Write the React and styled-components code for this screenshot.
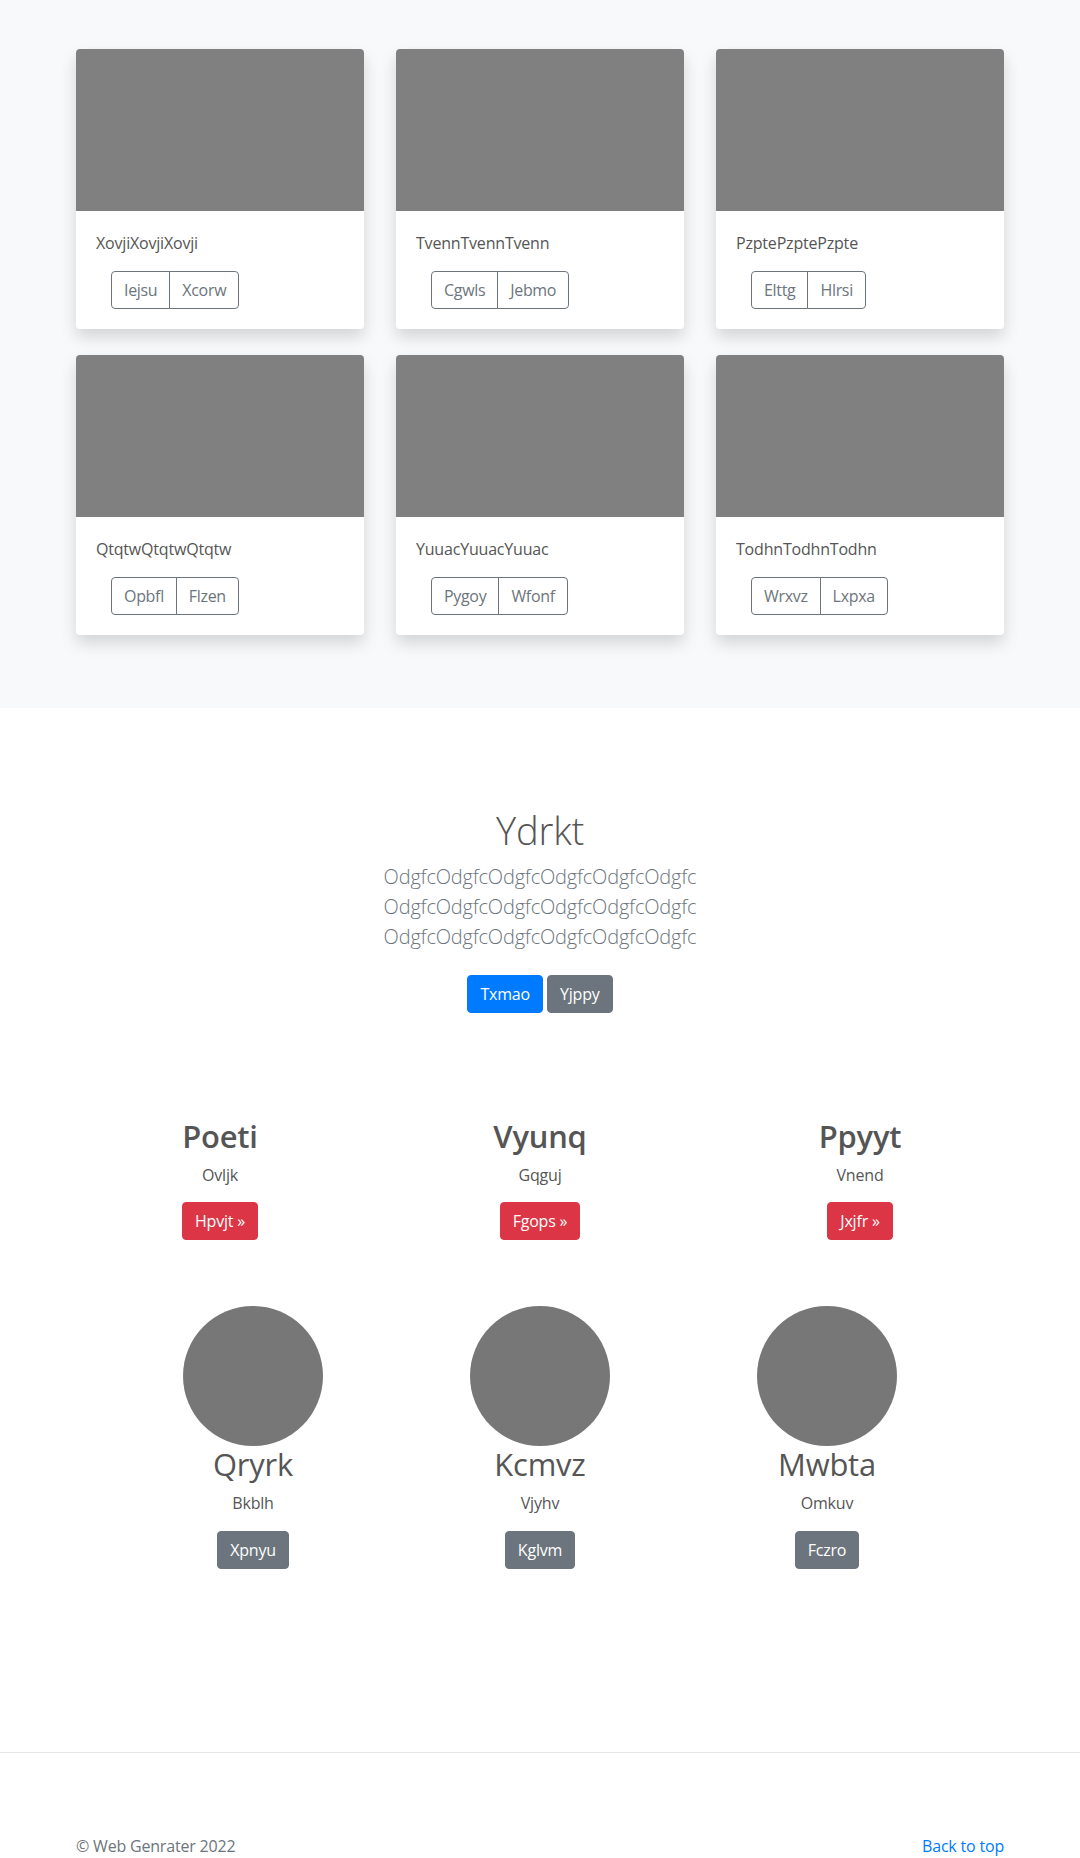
import React from 'react';
import styled, { createGlobalStyle } from 'styled-components';

const GlobalStyle = createGlobalStyle`
  *, *::before, *::after { box-sizing: border-box; }
  html, body { margin: 0; padding: 0; }
  body {
    font-family: "Open Sans", "Noto Sans", sans-serif;
    font-size: 16px;
    line-height: 1.5;
    letter-spacing: -0.012em;
    color: #555;
    background: #fff;
  }
`;

const AlbumSection = styled.section`
  background: #f8f9fa;
  padding: 49px 0 73px;
`;

const CardGrid = styled.div`
  width: 928px;
  margin: 0 auto;
  display: grid;
  grid-template-columns: repeat(3, 288px);
  column-gap: 32px;
  row-gap: 26px;
`;

const Card = styled.div`
  background: #fff;
  border-radius: 4px;
  overflow: hidden;
  box-shadow: 0 0.5rem 1rem rgba(0, 0, 0, 0.15);
`;

const Thumb = styled.div`
  height: 162px;
  background: #808080;
`;

const CardBody = styled.div`
  padding: 20px;
`;

const CardText = styled.p`
  margin: 0 0 16px;
  font-size: 16px;
  line-height: 24px;
  color: #555;
`;

const BtnGroup = styled.div`
  display: inline-flex;
  margin-left: 15px;
`;

const OutlineBtn = styled.button`
  font-family: inherit;
  font-size: 16px;
  line-height: 24px;
  letter-spacing: -0.02em;
  padding: 6px 12px;
  color: #6c757d;
  background: transparent;
  border: 1px solid #6c757d;
  border-radius: 0;
  cursor: pointer;
  &:first-child {
    border-radius: 4px 0 0 4px;
  }
  &:last-child {
    border-radius: 0 4px 4px 0;
    margin-left: -1px;
  }
`;

const Hero = styled.section`
  text-align: center;
  padding-top: 100px;
`;

const HeroInner = styled.div`
  width: 450px;
  margin: 0 auto;
`;

const HeroTitle = styled.h1`
  margin: 0 0 8px;
  font-size: 38.2px;
  font-weight: 300;
  line-height: 1.2;
  color: #555;
`;

const Lead = styled.p`
  margin: 0 0 15px;
  font-size: 20px;
  font-weight: 300;
  line-height: 1.5;
  color: #6c757d;
`;

const Actions = styled.p`
  margin: 0;
  line-height: 24px;
`;

const Btn = styled.a`
  display: inline-block;
  padding: 6px 12px;
  font-size: 16px;
  line-height: 24px;
  border-radius: 4px;
  color: #fff;
  background: ${(p) => p.$bg};
  border: 1px solid ${(p) => p.$bg};
  margin: ${(p) => (p.$spaced ? '8px 0' : '0')};
  text-decoration: none;
  cursor: pointer;
`;

const Marketing = styled.section`
  padding-top: 97px;
`;

const FeatureRow = styled.div`
  width: ${(p) => p.$width}px;
  margin: ${(p) => p.$top}px auto 0;
  display: grid;
  grid-template-columns: repeat(3, 1fr);
  text-align: center;
`;

const Col = styled.div`
  display: flex;
  flex-direction: column;
  align-items: center;
`;

const ColTitle = styled.h2`
  margin: 0 0 8px;
  font-size: 30.9px;
  line-height: 1.2;
  font-weight: ${(p) => p.$weight};
  color: #555;
`;

const ColText = styled.p`
  margin: 0 0 ${(p) => p.$gap}px;
  font-size: 16px;
  line-height: 24px;
  color: #555;
`;

const Avatar = styled.div`
  width: 140px;
  height: 140px;
  border-radius: 50%;
  background: #777;
`;

const Footer = styled.footer`
  margin-top: 183px;
  border-top: 1px solid #e5e5e5;
  padding: 81px 0 48px;
  color: #6c757d;
`;

const FooterInner = styled.div`
  width: 928px;
  margin: 0 auto;
  display: flex;
  justify-content: space-between;
  align-items: baseline;
`;

const FooterText = styled.p`
  margin: 0;
  font-size: 16px;
  line-height: 24px;
`;

const FooterLink = styled.a`
  color: #007bff;
  text-decoration: none;
  font-size: 16px;
  line-height: 24px;
`;

const cards = [
  ['XovjiXovjiXovji', 'Iejsu', 'Xcorw'],
  ['TvennTvennTvenn', 'Cgwls', 'Jebmo'],
  ['PzptePzptePzpte', 'Elttg', 'Hlrsi'],
  ['QtqtwQtqtwQtqtw', 'Opbfl', 'Flzen'],
  ['YuuacYuuacYuuac', 'Pygoy', 'Wfonf'],
  ['TodhnTodhnTodhn', 'Wrxvz', 'Lxpxa'],
];

const features = [
  ['Poeti', 'Ovljk', 'Hpvjt »'],
  ['Vyunq', 'Gqguj', 'Fgops »'],
  ['Ppyyt', 'Vnend', 'Jxjfr »'],
];

const people = [
  ['Qryrk', 'Bkblh', 'Xpnyu'],
  ['Kcmvz', 'Vjyhv', 'Kglvm'],
  ['Mwbta', 'Omkuv', 'Fczro'],
];

const word = 'Odgfc'.repeat(6);

export default function App() {
  return (
    <>
      <GlobalStyle />
      <AlbumSection>
        <CardGrid>
          {cards.map(([text, a, b]) => (
            <Card key={text}>
              <Thumb />
              <CardBody>
                <CardText>{text}</CardText>
                <BtnGroup>
                  <OutlineBtn>{a}</OutlineBtn>
                  <OutlineBtn>{b}</OutlineBtn>
                </BtnGroup>
              </CardBody>
            </Card>
          ))}
        </CardGrid>
      </AlbumSection>

      <Hero>
        <HeroInner>
          <HeroTitle>Ydrkt</HeroTitle>
          <Lead>
            {word} {word} {word}
          </Lead>
          <Actions>
            <Btn $bg="#007bff" $spaced>Txmao</Btn>{' '}
            <Btn $bg="#6c757d" $spaced>Yjppy</Btn>
          </Actions>
        </HeroInner>
      </Hero>

      <Marketing>
        <FeatureRow $width={960} $top={0}>
          {features.map(([title, text, btn]) => (
            <Col key={title}>
              <ColTitle $weight={600}>{title}</ColTitle>
              <ColText $gap={15}>{text}</ColText>
              <Btn $bg="#dc3545">{btn}</Btn>
            </Col>
          ))}
        </FeatureRow>
        <FeatureRow $width={861} $top={66}>
          {people.map(([title, text, btn]) => (
            <Col key={title}>
              <Avatar />
              <ColTitle $weight={400}>{title}</ColTitle>
              <ColText $gap={16}>{text}</ColText>
              <Btn $bg="#6c757d">{btn}</Btn>
            </Col>
          ))}
        </FeatureRow>
      </Marketing>

      <Footer>
        <FooterInner>
          <FooterText>© Web Genrater 2022</FooterText>
          <FooterLink href="#">Back to top</FooterLink>
        </FooterInner>
      </Footer>
    </>
  );
}
